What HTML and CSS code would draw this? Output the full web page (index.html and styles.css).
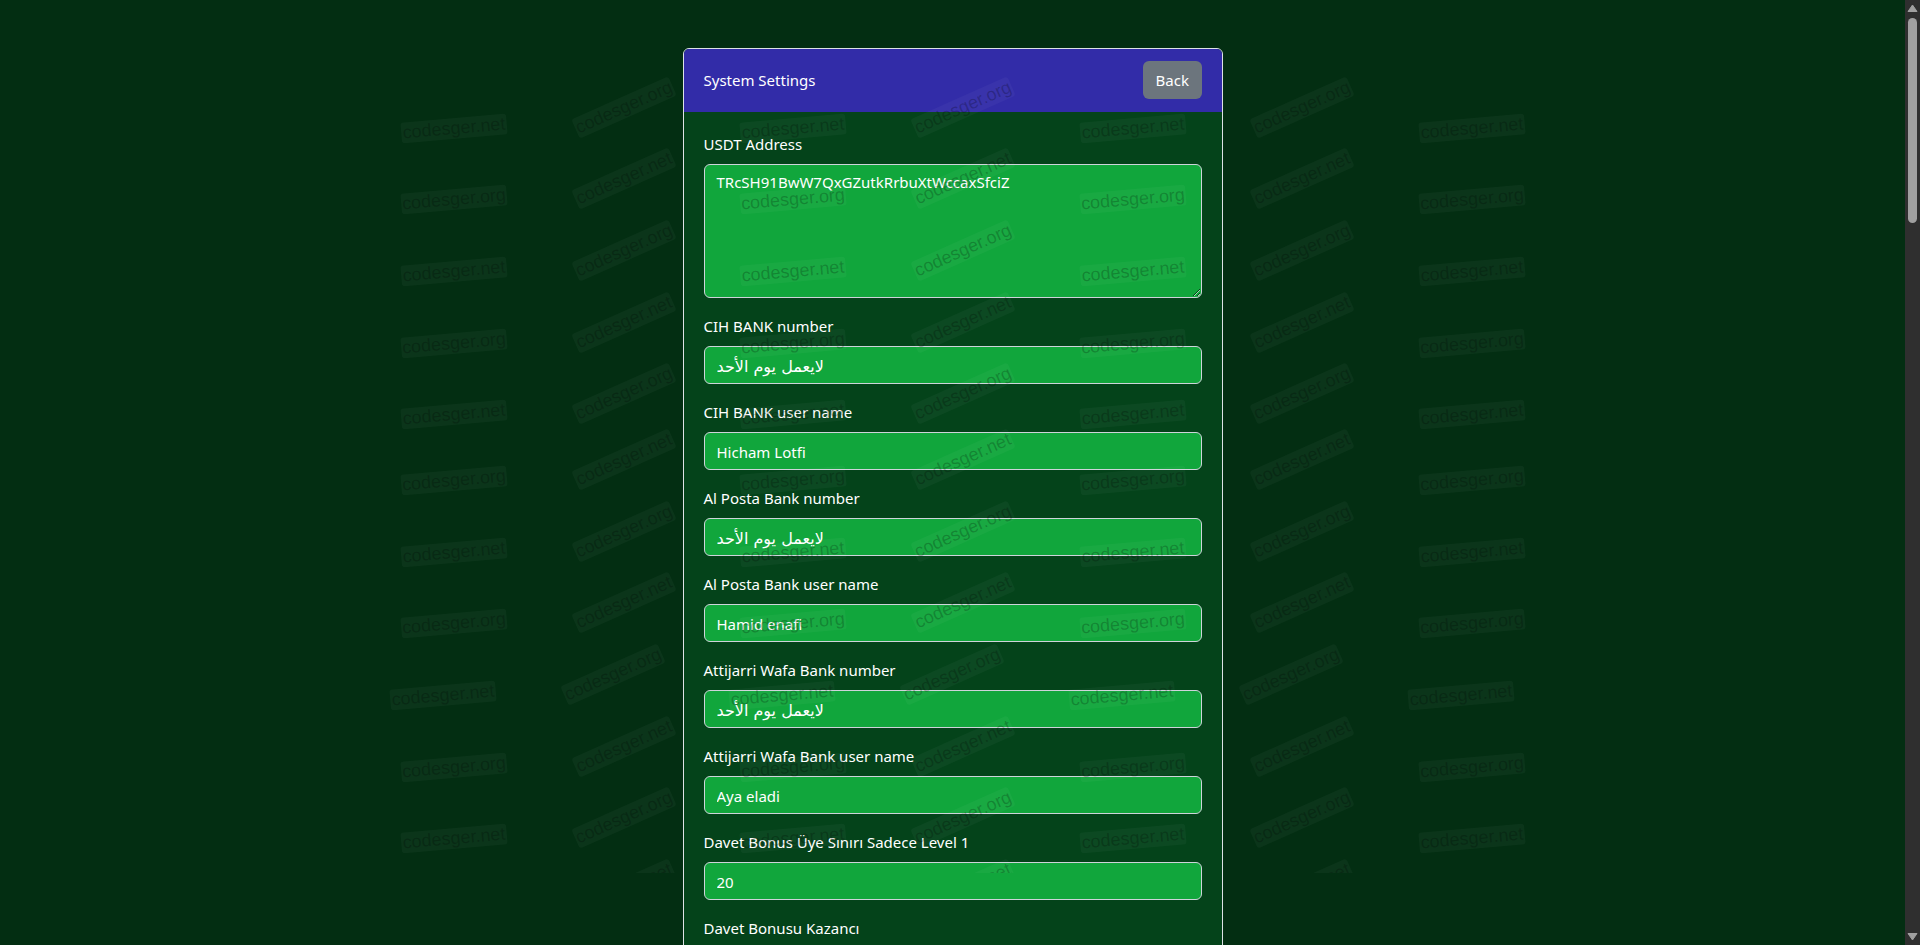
FILE: index.html
```html
<!DOCTYPE html>
<html>
  <head>
    <title>System Settings</title>
    <link rel="stylesheet" href="styles.css">
  </head>
  <body>
    <div class="container">
      <div class="card">
        <div class="card-header">
          <span class="card-title">System Settings</span>
          <a class="btn-back" href="#">Back</a>
        </div>
        <form class="card-body">
          <div class="field">
            <label for="usdt">USDT Address</label>
            <textarea id="usdt" rows="5">TRcSH91BwW7QxGZutkRrbuXtWccaxSfciZ</textarea>
          </div>
          <div class="field">
            <label for="cih-number">CIH BANK number</label>
            <input id="cih-number" class="arabic" type="text" value="لايعمل يوم الأحد">
          </div>
          <div class="field">
            <label for="cih-name">CIH BANK user name</label>
            <input id="cih-name" type="text" value="Hicham Lotfi">
          </div>
          <div class="field">
            <label for="posta-number">Al Posta Bank number</label>
            <input id="posta-number" class="arabic" type="text" value="لايعمل يوم الأحد">
          </div>
          <div class="field">
            <label for="posta-name">Al Posta Bank user name</label>
            <input id="posta-name" type="text" value="Hamid enafi">
          </div>
          <div class="field">
            <label for="wafa-number">Attijarri Wafa Bank number</label>
            <input id="wafa-number" class="arabic" type="text" value="لايعمل يوم الأحد">
          </div>
          <div class="field">
            <label for="wafa-name">Attijarri Wafa Bank user name</label>
            <input id="wafa-name" type="text" value="Aya eladi">
          </div>
          <div class="field">
            <label for="invite-limit">Davet Bonus Üye Sınırı Sadece Level 1</label>
            <input id="invite-limit" type="text" value="20">
          </div>
          <div class="field">
            <label for="invite-gain">Davet Bonusu Kazancı</label>
            <input id="invite-gain" type="text" value="">
          </div>
        </form>
      </div>
    </div>

    <!-- watermark stamps over the whole page -->
    <div class="watermark">
      <div class="mark-row"><span>codesger.org</span><span>codesger.net</span><span>codesger.org</span><span>codesger.net</span><span>codesger.org</span><span>codesger.net</span><span>codesger.org</span></div>
      <div class="mark-row"><span>codesger.net</span><span>codesger.org</span><span>codesger.net</span><span>codesger.org</span><span>codesger.net</span><span>codesger.org</span><span>codesger.net</span></div>
      <div class="mark-row"><span>codesger.org</span><span>codesger.net</span><span>codesger.org</span><span>codesger.net</span><span>codesger.org</span><span>codesger.net</span><span>codesger.org</span></div>
      <div class="mark-row"><span>codesger.net</span><span>codesger.org</span><span>codesger.net</span><span>codesger.org</span><span>codesger.net</span><span>codesger.org</span><span>codesger.net</span></div>
      <div class="mark-row"><span>codesger.org</span><span>codesger.net</span><span>codesger.org</span><span>codesger.net</span><span>codesger.org</span><span>codesger.net</span><span>codesger.org</span></div>
      <div class="mark-row"><span>codesger.net</span><span>codesger.org</span><span>codesger.net</span><span>codesger.org</span><span>codesger.net</span><span>codesger.org</span><span>codesger.net</span></div>
      <div class="mark-row mark-row-up"><span>codesger.org</span><span>codesger.net</span><span>codesger.org</span><span>codesger.net</span><span>codesger.org</span><span>codesger.net</span><span>codesger.org</span></div>
      <div class="mark-row"><span>codesger.net</span><span>codesger.org</span><span>codesger.net</span><span>codesger.org</span><span>codesger.net</span><span>codesger.org</span><span>codesger.net</span></div>
      <div class="mark-row"><span>codesger.org</span><span>codesger.net</span><span>codesger.org</span><span>codesger.net</span><span>codesger.org</span><span>codesger.net</span><span>codesger.org</span></div>
      <div class="mark-row mark-row-left"><span>codesger.net</span><span>codesger.org</span><span>codesger.net</span><span>codesger.org</span><span>codesger.net</span><span>codesger.org</span><span>codesger.net</span></div>
      <div class="mark-row"><span>codesger.org</span><span>codesger.net</span><span>codesger.org</span><span>codesger.net</span><span>codesger.org</span><span>codesger.net</span><span>codesger.org</span></div>
      <div class="mark-row"><span>codesger.net</span><span>codesger.org</span><span>codesger.net</span><span>codesger.org</span><span>codesger.net</span><span>codesger.org</span><span>codesger.net</span></div>
      <div class="mark-row"><span>codesger.org</span><span>codesger.net</span><span>codesger.org</span><span>codesger.net</span><span>codesger.org</span><span>codesger.net</span><span>codesger.org</span></div>
    </div>

    <!-- the window scrollbar, the capture does not paint a native one -->
    <div class="scrollbar">
      <svg class="scroll-arrow" viewBox="0 0 15 17"><path d="M7.500 5L12 11.500H3z" fill="#a0a0a0" stroke="#a0a0a0" stroke-linejoin="round"/></svg>
      <div class="scroll-thumb"></div>
      <svg class="scroll-arrow scroll-arrow-down" viewBox="0 0 15 17"><path d="M7.500 12L3 5.500H12z" fill="#a0a0a0" stroke="#a0a0a0" stroke-linejoin="round"/></svg>
    </div>
  </body>
</html>
```

FILE: styles.css
```css
html {
  background-color: #032e12;
}

body {
  margin: 0;
  padding-right: 15px;
  position: relative;
  font-family: "Noto Sans", sans-serif;
  font-size: 15px;
  line-height: 24px;
  color: #fff;
  background-color: #032e12;
}

.container {
  width: 540px;
  margin: 0 auto;
  padding: 48px 0;
}

.card {
  min-height: 4122px;
  background-color: #04431a;
  border: 1px solid #dee2e6;
  border-radius: 6px;
  overflow: hidden;
}

.card-header {
  display: flex;
  justify-content: space-between;
  align-items: center;
  padding: 12px 20px;
  background-color: #322ca8;
  border-bottom: 1px solid #322ca8;
}

.btn-back {
  padding: 7px 12.500px;
  line-height: 24px;
  color: #fff;
  text-decoration: none;
  background-color: #6c757d;
  border-radius: 6px;
}

.card-body {
  padding: 20px;
}

.field {
  margin-bottom: 16px;
}

.field label {
  display: block;
  margin-bottom: 8px;
}

.field input,
.field textarea {
  display: block;
  box-sizing: border-box;
  width: 100%;
  padding: 7px 12px 5px;
  font-family: inherit;
  font-size: inherit;
  line-height: 24px;
  color: #fff;
  background-color: #11a63c;
  border: 1px solid #ced4da;
  border-radius: 6px;
  outline: none;
}

.field textarea {
  height: 134px;
  padding-top: 5px;
  resize: vertical;
}

.field input.arabic {
  padding-top: 8px;
  padding-bottom: 4px;
  font-family: "DejaVu Sans", sans-serif;
  font-size: 16px;
}

.watermark {
  position: absolute;
  top: 72px;
  left: 369px;
  width: 1190px;
  height: 801px;
  overflow: hidden;
  pointer-events: none;
}

.mark-row {
  display: flex;
  height: 71.6px;
  align-items: center;
}

.mark-row:first-child {
  margin-top: -51px;
}

.mark-row-up {
  margin-top: -5.6px;
}

.mark-row-left {
  margin-left: -11px;
}

.mark-row span {
  flex: 0 0 106px;
  margin: 0 31.85px;
  height: 21px;
  font-family: "Liberation Sans", sans-serif;
  font-size: 18px;
  line-height: 21px;
  text-align: center;
  color: rgba(0, 0, 0, 0.22);
  background-color: rgba(255, 255, 255, 0.035);
  border-radius: 3px;
  transform: rotate(-5deg);
}

.mark-row span:nth-child(even) {
  transform: translateY(-21px) rotate(-24deg);
}

.scrollbar {
  position: fixed;
  top: 0;
  right: 0;
  bottom: 0;
  width: 15px;
  display: flex;
  flex-direction: column;
  background-color: #2f2f2f;
}

.scroll-arrow {
  display: block;
  flex: 0 0 17px;
  width: 15px;
  height: 17px;
}

.scroll-arrow-down {
  margin-top: auto;
}

.scroll-thumb {
  height: 205px;
  margin: 1px 3px 0;
  background-color: #a0a0a0;
  border-radius: 5px;
}
```
